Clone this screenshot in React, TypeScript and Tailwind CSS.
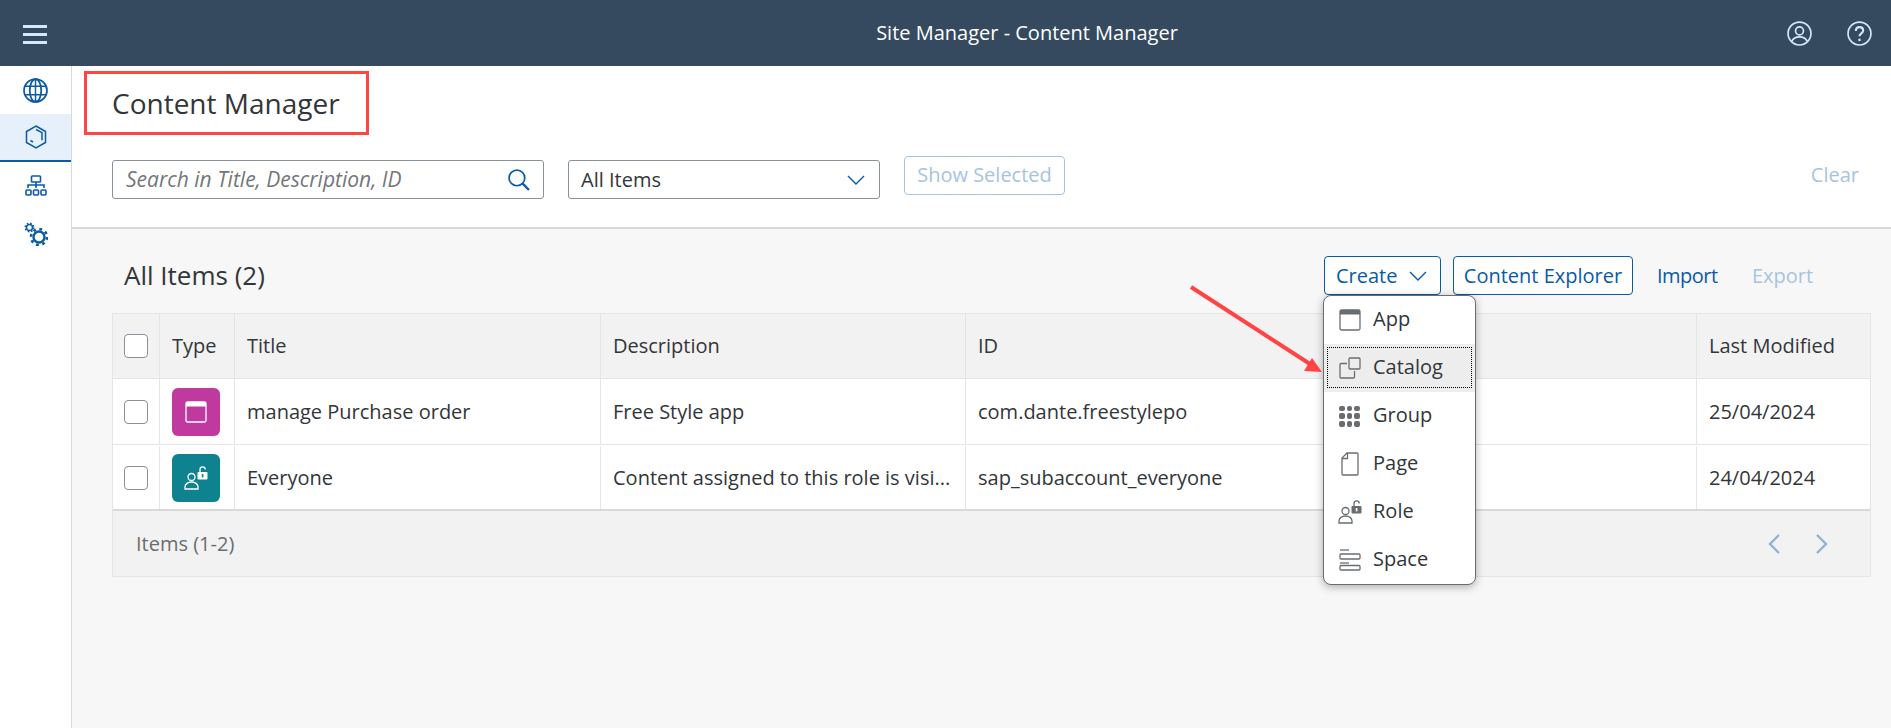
const font = "font-['Open_Sans','Noto_Sans',sans-serif]";

function Globe() {
  return (
    <svg width="25" height="25" viewBox="0 0 24 24" fill="none" stroke="#0a5aa5" strokeWidth="1.7">
      <circle cx="12" cy="12" r="11" />
      <ellipse cx="12" cy="12" rx="5.5" ry="11" />
      <path d="M2 8h20M2 16h20M12 1v22" strokeWidth="1.4" />
    </svg>
  );
}
function Cube() {
  return (
    <svg width="22" height="24" viewBox="0 0 22 24" fill="none" stroke="#0a5aa5" strokeWidth="1.5">
      <path d="M11 1l9.5 5.5v11L11 23l-9.5-5.5v-11z" />
      <path d="M11 4.5l6 3.2v7.5M5.5 15.5l2.5 1.5" />
    </svg>
  );
}
function Tree() {
  return (
    <svg width="22" height="22" viewBox="0 0 22 22" fill="none" stroke="#0a5aa5" strokeWidth="1.6">
      <rect x="6.5" y="1" width="9" height="6" rx="0.8" />
      <path d="M11 7v6M3 13v-3h16v3" />
      <rect x="1" y="15" width="5" height="5" rx="1" />
      <rect x="8.5" y="15" width="5" height="5" rx="1" />
      <rect x="16" y="15" width="5" height="5" rx="1" />
    </svg>
  );
}
function Gears() {
  return (
    <svg width="24" height="24" viewBox="0 0 24 24" fill="none" stroke="#0a5aa5">
      <circle cx="5.5" cy="5.5" r="3" strokeWidth="1.5" />
      <circle cx="5.5" cy="5.5" r="4.3" strokeWidth="1.4" strokeDasharray="1.6 1.8" />
      <circle cx="15" cy="15" r="5.5" strokeWidth="2.4" />
      <circle cx="15" cy="15" r="8" strokeWidth="2.6" strokeDasharray="2.8 3.5" />
    </svg>
  );
}
function Search() {
  return (
    <svg width="22" height="22" viewBox="0 0 21 21" fill="none" stroke="#0a5aa5" strokeWidth="1.6">
      <circle cx="8.5" cy="8.5" r="7.5" />
      <path d="M14 14l6 6" strokeWidth="2.2" />
    </svg>
  );
}
function Chevron() {
  return (
    <svg width="18" height="10" viewBox="0 0 18 10" fill="none" stroke="#0a5aa5" strokeWidth="1.4">
      <path d="M1 1l8 8 8-8" />
    </svg>
  );
}
function AppIcon({ c, size = 22 }: { c: string; size?: number }) {
  return (
    <svg width={size} height={size} viewBox="0 0 22 22" fill="none">
      <rect x="1" y="1" width="20" height="20" rx="1.5" stroke={c} strokeWidth="1.3" />
      <path d="M1 2.5a1.5 1.5 0 011.5-1.5h17A1.5 1.5 0 0121 2.5V5.5H1z" fill={c} />
    </svg>
  );
}
function RoleIcon({ c, bg }: { c: string; bg: string }) {
  return (
    <svg width="24" height="24" viewBox="0 0 24 24" fill="none">
      <circle cx="7.5" cy="11" r="3.5" stroke={c} strokeWidth="1.3" />
      <path d="M1 23v-2c0-3 3-5 6.5-5s6.5 2 6.5 5v2z" stroke={c} strokeWidth="1.3" />
      <path d="M16 6V3.5a2.6 2.6 0 015.2 0" stroke={c} strokeWidth="1.3" />
      <rect x="13.5" y="6" width="10" height="7.5" rx="1" fill={c} />
      <rect x="17.8" y="8" width="1.6" height="3.4" fill={bg} />
    </svg>
  );
}
function CatalogIcon() {
  return (
    <svg width="22" height="22" viewBox="0 0 22 22" fill="none" stroke="#6a6d70" strokeWidth="1.3">
      <path d="M8 6.5H2a1 1 0 00-1 1V20a1 1 0 001 1h12.5a1 1 0 001-1v-6" />
      <rect x="10" y="1" width="11" height="11" rx="1" />
    </svg>
  );
}
function GroupIcon() {
  const dots = [0, 1, 2, 3, 4, 5, 6, 7, 8];
  return (
    <div className="grid h-[21px] w-[21px] grid-cols-3 gap-[2px]">
      {dots.map((d) => (
        <span key={d} className="rounded-[2px] bg-[#6a6d70]" />
      ))}
    </div>
  );
}
function PageIcon() {
  return (
    <svg width="18" height="24" viewBox="0 0 18 24" fill="none" stroke="#6a6d70" strokeWidth="1.3">
      <path d="M6 1h10a1 1 0 011 1v20a1 1 0 01-1 1H2a1 1 0 01-1-1V6z" />
      <path d="M1 6.5h5.5V1" />
    </svg>
  );
}
function SpaceIcon() {
  return (
    <svg width="22" height="22" viewBox="0 0 22 22" fill="none" stroke="#6a6d70" strokeWidth="1.3">
      <path d="M1 1h9" />
      <rect x="1" y="5" width="20" height="5" rx="1" />
      <path d="M1 14h9" />
      <rect x="1" y="16.5" width="20" height="4.5" rx="1" />
    </svg>
  );
}

function Check() {
  return <span className="block h-6 w-6 rounded-[4px] border border-[#89919a] bg-white" />;
}

const cell = "flex items-center border-r border-[#e5e5e5] pl-[12px] pr-2 text-[#32363a] text-[20px] overflow-hidden whitespace-nowrap";

function Row({ icon, color, title, desc, id, date, last }: { icon: React.ReactNode; color: string; title: string; desc: string; id: string; date: string; last?: boolean }) {
  return (
    <div className={`grid grid-cols-[47px_75px_366px_365px_1fr_173px] bg-white ${last ? "h-[64px] pt-[1px]" : "h-[66px] border-b border-[#e5e5e5]"}`}>
      <div className="flex items-center justify-center border-r border-[#e5e5e5]"><Check /></div>
      <div className="flex items-center border-r border-[#e5e5e5] pl-[12px]">
        <div className={`flex h-12 w-12 items-center justify-center rounded-[6px] ${color}`}>{icon}</div>
      </div>
      <div className={cell}>{title}</div>
      <div className={cell}>{desc}</div>
      <div className={cell}>{id}</div>
      <div className="flex items-center pl-[12px] text-[20px] text-[#32363a]">{date}</div>
    </div>
  );
}

const menuItems: { label: string; icon: React.ReactNode; active?: boolean }[] = [
  { label: "App", icon: <AppIcon c="#6a6d70" /> },
  { label: "Catalog", icon: <CatalogIcon />, active: true },
  { label: "Group", icon: <GroupIcon /> },
  { label: "Page", icon: <PageIcon /> },
  { label: "Role", icon: <RoleIcon c="#6a6d70" bg="#ffffff" /> },
  { label: "Space", icon: <SpaceIcon /> },
];

export default function App() {
  return (
    <div className={`relative flex h-[728px] w-[1891px] flex-col overflow-hidden bg-white ${font}`}>
      <header className="flex h-[66px] shrink-0 items-center bg-[#354a5f] pl-[23px] pr-[19px]">
        <div className="mt-[3px] flex w-[24px] flex-col gap-[5px]">
          <span className="h-[3px] bg-[#d1e8ff]" />
          <span className="h-[3px] bg-[#d1e8ff]" />
          <span className="h-[3px] bg-[#d1e8ff]" />
        </div>
        <div className="flex-1 pl-[220px] text-center text-[20px] text-white">Site Manager - Content Manager</div>
        <div className="flex items-center gap-[35px]">
          <svg width="25" height="25" viewBox="0 0 24 24" fill="none" stroke="#d1e8ff" strokeWidth="1.6">
            <circle cx="12" cy="12" r="11" />
            <circle cx="12" cy="9.5" r="3.8" />
            <path d="M4.5 19.5c1.5-3 4.3-4.3 7.5-4.3s6 1.3 7.5 4.3" />
          </svg>
          <svg width="25" height="25" viewBox="0 0 24 24" fill="none" stroke="#d1e8ff" strokeWidth="1.6">
            <circle cx="12" cy="12" r="11" />
            <path d="M8.5 9.5c0-2.3 1.5-3.6 3.5-3.6s3.5 1.3 3.5 3.2c0 2.8-3.5 2.7-3.5 5.6" strokeWidth="2" />
            <path d="M12 17v2.2" strokeWidth="2.2" />
          </svg>
        </div>
      </header>
      <div className="flex min-h-0 flex-1">
        <aside className="flex w-[72px] shrink-0 flex-col border-r border-[#d9d9d9] bg-white">
          <div className="flex h-[48px] items-center justify-center"><Globe /></div>
          <div className="flex h-[48px] items-center justify-center border-b-2 border-[#0a5aa5] bg-[#e5f0fa]"><Cube /></div>
          <div className="flex h-[48px] items-center justify-center"><Tree /></div>
          <div className="flex h-[48px] items-center justify-center"><Gears /></div>
        </aside>
        <main className="flex min-w-0 flex-1 flex-col bg-[#f7f7f7]">
          <section className="h-[163px] shrink-0 border-b-2 border-[#d9d9d9] bg-white pl-[40px] pr-[32px]">
            <div className="relative flex h-[76px] items-center">
              <h1 className="pb-[3px] text-[28px] font-normal text-[#32363a]">Content Manager</h1>
              <div className="absolute left-[-28px] top-[5px] h-[64px] w-[285px] border-[3px] border-[#ff4444]" />
            </div>
            <div className="flex items-start pt-[5px]">
              <div className="mt-[13px] flex h-[39px] w-[432px] items-center justify-between rounded-[3px] border border-[#89919a] pl-[13px] pr-[13px]">
                <span className="text-[21px] italic text-[#74777a]">Search in Title, Description, ID</span>
                <Search />
              </div>
              <div className="ml-[24px] mt-[13px] flex h-[39px] w-[312px] items-center justify-between rounded-[3px] border border-[#89919a] pl-[12px] pr-[14px]">
                <span className="text-[20px] text-[#32363a]">All Items</span>
                <Chevron />
              </div>
              <div className="ml-[24px] mt-[9px] flex h-[39px] w-[161px] items-center justify-center rounded-[4px] border border-[#a6c4e0] pb-[2px] text-[20px] text-[#a6c4e0]">Show Selected</div>
              <div className="ml-auto mt-[8px] text-[20px] leading-[39px] text-[#a6c4e0]">Clear</div>
            </div>
          </section>
          <section className="flex-1 pl-[40px] pr-[20px]">
            <div className="flex h-[84px] items-center pt-[9px]">
              <div className="pl-[12px] text-[26px] text-[#32363a]">All Items (2)</div>
              <div className="relative ml-auto flex items-center text-[20px] text-[#0a5aa5]">
                <div className="flex h-[39px] w-[117px] items-center justify-between rounded-[4px] border border-[#0a5aa5] bg-white pl-[11px] pr-[13px]">
                  <span>Create</span>
                  <Chevron />
                </div>
                <div className="ml-[12px] flex h-[39px] w-[180px] items-center justify-center rounded-[4px] border border-[#0a5aa5] bg-white">Content Explorer</div>
                <div className="ml-[24px] w-[60px] whitespace-nowrap tracking-[-0.5px]">Import</div>
                <div className="ml-[35px] mr-[59px] w-[60px] whitespace-nowrap text-[#a6c4e0]">Export</div>
                <div className="absolute left-[-1px] top-[39px] z-10 w-[153px] rounded-[8px] border border-[#6a6d70] bg-white shadow-[0_2px_8px_rgba(0,0,0,0.3)]">
                  {menuItems.map((m) => (
                    <div key={m.label} className={`relative flex h-[48px] items-center text-[20px] text-[#32363a] ${m.active ? "bg-[#ededed]" : ""}`}>
                      <div className="flex w-[49px] shrink-0 items-center justify-center pl-[2px]">{m.icon}</div>
                      <span className="pb-[2px]">{m.label}</span>
                      {m.active && <div className="absolute bottom-[4px] left-[3px] right-[3px] top-[3px] border border-dotted border-black" />}
                    </div>
                  ))}
                </div>
              </div>
            </div>
            <div className="border border-[#e5e5e5]">
              <div className="grid h-[65px] grid-cols-[47px_75px_366px_365px_1fr_173px] border-b border-[#e5e5e5] bg-[#f2f2f2]">
                <div className="flex items-center justify-center border-r border-[#e5e5e5]"><Check /></div>
                <div className={cell}>Type</div>
                <div className={cell}>Title</div>
                <div className={cell}>Description</div>
                <div className={cell}>ID</div>
                <div className="flex items-center pl-[12px] text-[20px] text-[#32363a]">Last Modified</div>
              </div>
              <Row
                icon={<AppIcon c="#ffffff" />}
                color="bg-[#c0399f]"
                title="manage Purchase order"
                desc="Free Style app"
                id="com.dante.freestylepo"
                date="25/04/2024"
              />
              <Row
                icon={<RoleIcon c="#ffffff" bg="#0f828f" />}
                color="bg-[#0f828f]"
                title="Everyone"
                desc="Content assigned to this role is visi..."
                id="sap_subaccount_everyone"
                date="24/04/2024"
                last
              />
              <div className="flex h-[67px] items-center justify-between border-t-2 border-[#d9d9d9] bg-[#f2f2f2] pl-[23px] pr-[42px]">
                <span className="text-[20px] text-[#6a6d70]">Items (1-2)</span>
                <div className="flex items-center gap-[36px]">
                  <svg width="12" height="20" viewBox="0 0 12 20" fill="none" stroke="#8fb2d6" strokeWidth="2.4"><path d="M11 1L2 10l9 9" /></svg>
                  <svg width="12" height="20" viewBox="0 0 12 20" fill="none" stroke="#8fb2d6" strokeWidth="2.4"><path d="M1 1l9 9-9 9" /></svg>
                </div>
              </div>
            </div>
          </section>
        </main>
      </div>
      <svg className="absolute left-[1180px] top-[280px] z-20" width="150" height="100" viewBox="0 0 150 100" fill="none">
        <path d="M11 7L130 84" stroke="#f44" strokeWidth="4" />
        <path d="M142 92l-18-1 8-13z" fill="#f44" />
      </svg>
    </div>
  );
}
